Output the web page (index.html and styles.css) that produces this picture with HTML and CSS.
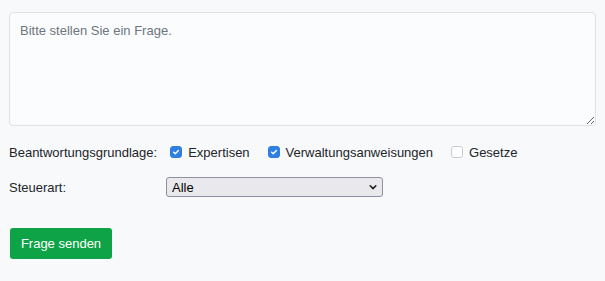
FILE: index.html
```html
<!DOCTYPE html>
<html lang="de">
<head>
<meta charset="utf-8">
<link rel="stylesheet" href="styles.css">
</head>
<body>
<form class="form">
  <textarea class="question" placeholder="Bitte stellen Sie ein Frage."></textarea>
  <div class="row basis">
    <span class="label">Beantwortungsgrundlage:</span>
    <label class="check"><span class="box on"><svg viewBox="0 0 12 12" width="12" height="12"><path d="M3.2 6.2l1.9 1.9 3.8-4" fill="none" stroke="#fff" stroke-width="1.7" stroke-linecap="round" stroke-linejoin="round"/></svg></span>Expertisen</label>
    <label class="check"><span class="box on"><svg viewBox="0 0 12 12" width="12" height="12"><path d="M3.2 6.2l1.9 1.9 3.8-4" fill="none" stroke="#fff" stroke-width="1.7" stroke-linecap="round" stroke-linejoin="round"/></svg></span>Verwaltungsanweisungen</label>
    <label class="check"><span class="box"></span>Gesetze</label>
  </div>
  <div class="row tax">
    <span class="label fixed">Steuerart:</span>
    <div class="select"><span>Alle</span><svg viewBox="0 0 10 10" width="10" height="10"><path d="M2.2 3.8l2.8 2.8 2.8-2.8" fill="none" stroke="#222" stroke-width="1.6" stroke-linecap="round" stroke-linejoin="round"/></svg></div>
  </div>
  <button type="button" class="send">Frage senden</button>
</form>
</body>
</html>
```

FILE: styles.css
```css
html, body {
  margin: 0;
  padding: 0;
  background: #f8f9fb;
}
body {
  font-family: "Liberation Sans", Arial, sans-serif;
  font-size: 13px;
  color: #212529;
}
.form {
  display: flex;
  flex-direction: column;
  align-items: flex-start;
  padding: 12px 9px 0 9px;
}
.question {
  box-sizing: border-box;
  width: 587px;
  height: 114px;
  border: 1px solid #dee2e6;
  border-radius: 4px;
  background: #fbfcfd;
  padding: 10px 10px;
  font-family: "Liberation Sans", Arial, sans-serif;
  font-size: 13px;
  color: #212529;
  resize: vertical;
  margin: 0;
}
.question::placeholder {
  color: #6c757d;
}
.row {
  display: flex;
  align-items: center;
}
.basis {
  margin-top: 18px;
  height: 16px;
}
.label {
  white-space: nowrap;
}
.basis .label {
  margin-right: 13px;
}
.fixed {
  width: 157px;
}
.check {
  display: flex;
  align-items: center;
  margin-right: 18px;
}
.box {
  box-sizing: border-box;
  width: 12px;
  height: 12px;
  border-radius: 3px;
  border: 1px solid #c9cdd2;
  background: #fff;
  margin-right: 6px;
  display: flex;
  align-items: center;
  justify-content: center;
}
.box.on {
  background: #2f7fe3;
  border-color: #2f7fe3;
}
.box svg {
  display: block;
}
.tax {
  margin-top: 17px;
}
.select {
  box-sizing: border-box;
  width: 217px;
  height: 20px;
  border: 1px solid #8f8f9d;
  border-radius: 3px;
  background: #e9e9ed;
  display: flex;
  align-items: center;
  justify-content: space-between;
  padding: 0 4px 0 5px;
  color: #000;
}
.select svg {
  display: block;
}
.send {
  margin-top: 31px;
  margin-left: 1px;
  height: 31px;
  width: 102px;
  border: none;
  border-radius: 3px;
  background: #0ea346;
  color: #fff;
  font-family: "Liberation Sans", Arial, sans-serif;
  font-size: 13px;
  padding: 0;
}
```
